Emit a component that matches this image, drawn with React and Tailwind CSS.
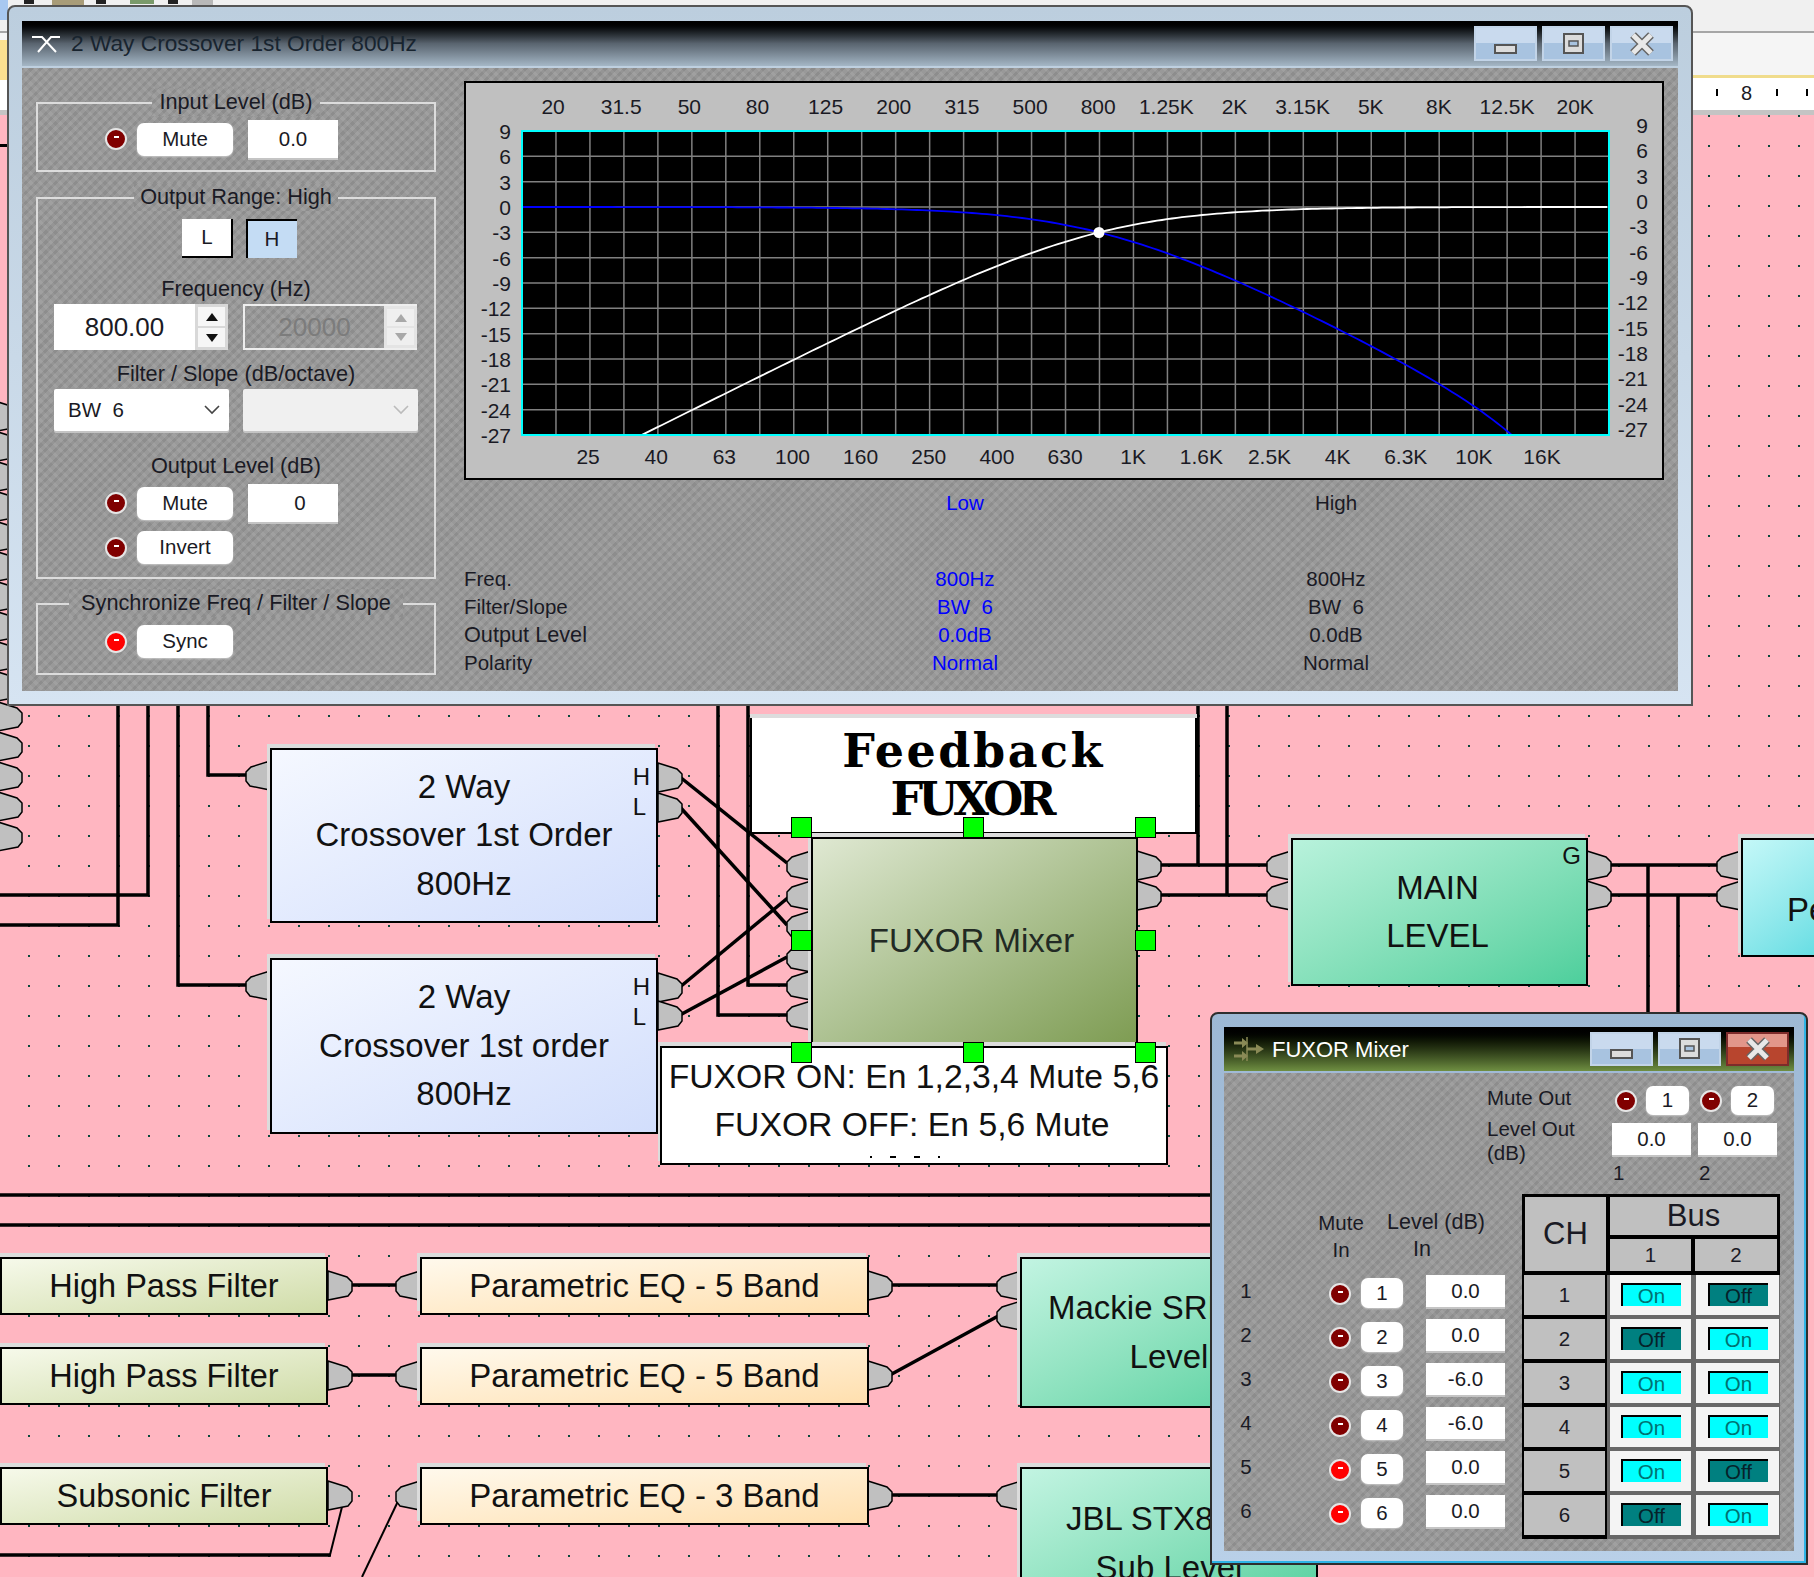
const TEX =
  "bg-[#999999] bg-[repeating-linear-gradient(45deg,rgba(255,255,255,0.07)_0_3px,transparent_3px_7px),repeating-linear-gradient(-45deg,rgba(0,0,0,0.08)_0_3px,transparent_3px_7px)]";

/* ---------- small controls ---------- */
function Led({ on }) {
  return (
    <div className={`relative w-[22px] h-[22px] shrink-0 rounded-full border-2 border-[#e6e6e6] ${on ? "bg-[#ff0000]" : "bg-[#800000]"}`}>
      <div className="absolute left-[7px] top-[6px] w-[5px] h-[2px] bg-white" />
    </div>
  );
}

function Btn({ className, children }) {
  return (
    <div className={`flex items-center justify-center rounded-[7px] bg-white shadow-[0_1px_2px_#c8c8c8] ${className}`}>{children}</div>
  );
}

function Field({ className, children }) {
  return <div className={`flex items-center justify-center bg-white shadow-[0_2px_0_#c4c4c4] ${className}`}>{children}</div>;
}

function Group({ label, labelPad, className, children }) {
  return (
    <div className={`relative border-2 border-[#dcdcdc] ${className}`}>
      <div className="absolute left-0 right-0 -top-[16px] flex justify-center">
        <span className={`${TEX} ${labelPad} h-[28px] leading-[28px] text-[21.7px] whitespace-nowrap`}>{label}</span>
      </div>
      {children}
    </div>
  );
}

function Spin({ value, disabled }) {
  return (
    <div className={`flex h-[46px] w-[174px] ${disabled ? "border-2 border-r-0 border-[#eeeeee]" : "bg-white"}`}>
      <div className={`flex-1 flex items-center justify-center text-[26px] ${disabled ? "text-[#7c7c7c]" : ""}`}>{value}</div>
      <div className={`w-[33px] flex flex-col gap-[2px] p-[3px] ${disabled ? "bg-[#e4e4e4]" : "bg-[#d8d8d8]"}`}>
        <div className={`flex-1 flex items-center justify-center ${disabled ? "bg-[#efefef]" : "bg-[#f6f6f6]"}`}>
          <svg width="12" height="8" viewBox="0 0 12 8"><path d="M6 0 L12 8 H0 Z" fill={disabled ? "#a8a8a8" : "#111"} /></svg>
        </div>
        <div className={`flex-1 flex items-center justify-center ${disabled ? "bg-[#efefef]" : "bg-[#f6f6f6]"}`}>
          <svg width="12" height="8" viewBox="0 0 12 8"><path d="M6 8 L12 0 H0 Z" fill={disabled ? "#a8a8a8" : "#111"} /></svg>
        </div>
      </div>
    </div>
  );
}

function Select({ value, disabled, className }) {
  return (
    <div className={`flex items-center justify-between h-[42px] pl-[14px] pr-[8px] rounded-[2px] ${disabled ? "bg-[#f0f0f0]" : "bg-white"} shadow-[0_2px_0_#c4c4c4] ${className}`}>
      <span className="whitespace-pre">{value}</span>
      <svg width="18" height="10" viewBox="0 0 18 10">
        <path d="M2 1 L9 8 L16 1" fill="none" stroke={disabled ? "#bbb" : "#444"} strokeWidth="1.6" />
      </svg>
    </div>
  );
}

function WinBtn({ kind, red }) {
  return (
    <div className={`w-[63px] flex items-center justify-center border-2 ${red ? "border-[#7d2b2b] bg-linear-to-b from-[#e2968a] from-45% to-[#b8452e] to-45%" : "border-[#c2d4e8] bg-linear-to-b from-[#c9daee] from-50% to-[#a8c3e0] to-50%"}`}>
      <svg width="26" height="24" viewBox="0 0 26 24">
        {kind === "min" && <rect x="2" y="13" width="21" height="8" fill="#dcdcdc" stroke="#555" strokeWidth="2" />}
        {kind === "max" && (
          <>
            <rect x="3" y="2" width="19" height="19" fill="#dcdcdc" stroke="#555" strokeWidth="2" />
            <rect x="8" y="9" width="9" height="5" fill="#a8c3e0" stroke="#555" strokeWidth="1.5" />
          </>
        )}
        {kind === "close" && (
          <>
            <path d="M4 3 L22 21 M22 3 L4 21" stroke="#666" strokeWidth="8" />
            <path d="M4 3 L22 21 M22 3 L4 21" stroke="#e8e8e8" strokeWidth="5" />
          </>
        )}
      </svg>
    </div>
  );
}

/* ---------- crossover window ---------- */
const TOP_FREQS = ["20", "31.5", "50", "80", "125", "200", "315", "500", "800", "1.25K", "2K", "3.15K", "5K", "8K", "12.5K", "20K"];
const BOT_FREQS = ["25", "40", "63", "100", "160", "250", "400", "630", "1K", "1.6K", "2.5K", "4K", "6.3K", "10K", "16K"];
const DBS = ["9", "6", "3", "0", "-3", "-6", "-9", "-12", "-15", "-18", "-21", "-24", "-27"];

function curve(high) {
  const pts = [];
  const w = (f) => Math.tan((Math.PI * Math.min(f, 23900)) / 48000);
  for (let x = 0; x <= 1087; x += 5) {
    const f = 800 * Math.pow(2, (x - 577) / 102);
    const r = w(f) / w(800);
    const db = -10 * Math.log10(1 + (high ? 1 / (r * r) : r * r));
    pts.push(`${x},${(76 - (db / 3) * 25.33).toFixed(1)}`);
  }
  return pts.join(" ");
}

function Plot() {
  return (
    <svg width="1089" height="306" viewBox="-1 -1 1089 306" className="shrink-0 block">
      <rect x="0" y="0" width="1087" height="304" fill="#000" />
      {Array.from({ length: 31 }, (_, i) => (
        <path key={i} d={`M${(i + 1) * 33.97} 0 V304`} stroke="#808080" strokeWidth="1.5" />
      ))}
      {Array.from({ length: 11 }, (_, i) => (
        <path key={i} d={`M0 ${(i + 1) * 25.33} H1087`} stroke="#808080" strokeWidth="1.5" />
      ))}
      <polyline points={curve(true)} fill="none" stroke="#ffffff" strokeWidth="1.8" />
      <polyline points={curve(false)} fill="none" stroke="#0000ff" strokeWidth="1.8" />
      <circle cx="577" cy="101.5" r="5.5" fill="#fff" />
      <rect x="0" y="0" width="1087" height="304" fill="none" stroke="#00ffff" strokeWidth="2" />
    </svg>
  );
}

function ReadRow({ a, b, c }) {
  return (
    <div className="flex h-[28px] leading-[28px]">
      <div className="w-[371px] whitespace-nowrap">{a}</div>
      <div className="w-[260px] text-center text-[#0000ff] whitespace-pre">{b}</div>
      <div className="w-[260px] ml-[111px] text-center whitespace-pre">{c}</div>
    </div>
  );
}

function CrossoverWindow() {
  return (
    <div className="absolute left-[7px] top-[5px] w-[1686px] h-[701px] border-2 border-[#555555] rounded-t-[8px] bg-linear-to-b from-[#bccede] to-[#d6e4f2] pt-[14px] pl-[13px]">
      <div className="w-[1656px] h-[45px] flex items-center pl-[10px] pr-[5px] bg-linear-to-b from-black via-[#59646f] to-[#a5b7c6]">
        <svg width="30" height="18" viewBox="0 0 30 18" className="shrink-0">
          <path d="M0 2 H10 L24 17 M28 2 H19 L6 17" fill="none" stroke="#fff" strokeWidth="2" />
        </svg>
        <span className="ml-[9px] text-[22.7px] text-[#18242f] flex-1 whitespace-nowrap">2 Way Crossover 1st Order 800Hz</span>
        <div className="flex gap-[5px] h-[35px]">
          <WinBtn kind="min" />
          <WinBtn kind="max" />
          <WinBtn kind="close" />
        </div>
      </div>
      <div className={`mt-[2px] w-[1656px] h-[623px] flex ${TEX}`}>
        {/* left column of controls */}
        <div className="w-[400px] ml-[14px] pt-[34px] flex flex-col">
          <Group label="Input Level (dB)" labelPad="px-[7px]" className="h-[70px]">
            <div className="flex items-center pl-[67px] pt-[16px]">
              <Led />
              <Btn className="ml-[10px] w-[96px] h-[33px]">Mute</Btn>
              <Field className="ml-[15px] w-[90px] h-[38px]">0.0</Field>
            </div>
          </Group>
          <Group label="Output Range: High" labelPad="px-[6px]" className="mt-[25px] h-[382px]">
            <div className="flex justify-center gap-[13px] pt-[20px] pl-[6px]">
              <div className="flex items-center justify-center w-[51px] h-[39px] pl-[2px] bg-white border-b-2 border-r-2 border-black">L</div>
              <div className="flex items-center justify-center w-[51px] h-[39px] bg-[#c4dcf4] border-t-2 border-l-2 border-black">H</div>
            </div>
            <div className="mt-[16px] h-[30px] leading-[30px] text-center text-[21.7px]">Frequency (Hz)</div>
            <div className="flex gap-[15px] pl-[16px]">
              <Spin value="800.00" />
              <Spin value="20000" disabled />
            </div>
            <div className="mt-[9px] h-[30px] leading-[30px] text-center text-[21.7px]">Filter / Slope (dB/octave)</div>
            <div className="flex gap-[14px] pl-[16px]">
              <Select value="BW  6" className="w-[175px]" />
              <Select value="" disabled className="w-[175px]" />
            </div>
            <div className="mt-[20px] h-[30px] leading-[30px] text-center text-[21.7px]">Output Level (dB)</div>
            <div className="mt-[3px] flex items-center pl-[67px] h-[38px]">
              <Led />
              <Btn className="ml-[10px] w-[96px] h-[33px]">Mute</Btn>
              <Field className="ml-[15px] w-[90px] h-[38px] pl-[14px]">0</Field>
            </div>
            <div className="mt-[9px] flex items-center pl-[67px] h-[33px]">
              <Led />
              <Btn className="ml-[10px] w-[96px] h-[33px]">Invert</Btn>
            </div>
          </Group>
          <Group label="Synchronize Freq / Filter / Slope" labelPad="px-[12px]" className="mt-[24px] h-[72px]">
            <div className="flex items-center pl-[67px] pt-[20px]">
              <Led on />
              <Btn className="ml-[10px] w-[96px] h-[33px]">Sync</Btn>
            </div>
          </Group>
        </div>

        {/* right column: graph and readout */}
        <div className="ml-[28px] pt-[13px] w-[1200px]">
          <div className="h-[399px] border-2 border-black bg-[#c0c0c0] flex flex-col text-[21px]">
            <div className="h-[47px] pl-[53px] flex items-center">
              {TOP_FREQS.map((f) => (
                <div key={f} className="w-[68.15px] shrink-0 text-center">{f}</div>
              ))}
            </div>
            <div className="flex h-[306px]">
              <div className="w-[55px] shrink-0 pr-[10px] -mt-[11px] flex flex-col">
                {DBS.map((d) => (
                  <div key={d} className="h-[25.35px] shrink-0 leading-[25px] text-right">{d}</div>
                ))}
              </div>
              <Plot />
              <div className="flex-1 pr-[14px] -mt-[17px] flex flex-col">
                {DBS.map((d) => (
                  <div key={d} className="h-[25.35px] shrink-0 leading-[25px] text-right">{d}</div>
                ))}
              </div>
            </div>
            <div className="flex-1 pl-[88px] flex items-center">
              {BOT_FREQS.map((f) => (
                <div key={f} className="w-[68.15px] shrink-0 text-center">{f}</div>
              ))}
            </div>
          </div>
          <div className="mt-[9px]">
            <ReadRow a="" b="Low" c="High" />
          </div>
          <div className="mt-[48px]">
            <ReadRow a="Freq." b="800Hz" c="800Hz" />
            <ReadRow a="Filter/Slope" b="BW  6" c="BW  6" />
            <ReadRow a={<span className="text-[21.7px]">Output Level</span>} b="0.0dB" c="0.0dB" />
            <ReadRow a="Polarity" b="Normal" c="Normal" />
          </div>
        </div>
      </div>
    </div>
  );
}

/* ---------- mixer window ---------- */
const MIX_ROWS = [
  { n: "1", lit: false, lvl: "0.0", a: true, b: false },
  { n: "2", lit: false, lvl: "0.0", a: false, b: true },
  { n: "3", lit: false, lvl: "-6.0", a: true, b: true },
  { n: "4", lit: false, lvl: "-6.0", a: true, b: true },
  { n: "5", lit: true, lvl: "0.0", a: true, b: false },
  { n: "6", lit: true, lvl: "0.0", a: false, b: true },
];

function BusCell({ on, className }) {
  return (
    <div className={`h-[40px] flex justify-center pt-[8px] bg-[#f4f4f4] ${className}`}>
      <div className={`w-[60px] h-[23px] border-t-2 border-l-2 border-black text-center text-[20.5px] leading-[22px] ${on ? "bg-[#00ffff] text-[#007272]" : "bg-[#008080] text-[#06222a]"}`}>
        {on ? "On" : "Off"}
      </div>
    </div>
  );
}

function MixerWindow() {
  return (
    <div className="absolute left-[1210px] top-[1012px] w-[598px] h-[553px] border-2 border-[#2e2e2e] rounded-t-[8px] bg-linear-to-b from-[#9db8d4] to-[#b9d0e8] pt-[13px] pl-[12px] shadow-[inset_-2px_-2px_0_#2eb4e6]">
      <div className="w-[570px] h-[44px] flex items-center pl-[10px] pr-[5px] bg-linear-to-b from-black to-[#6f8f42]">
        <svg width="30" height="28" viewBox="0 0 30 28" className="shrink-0">
          <path d="M0 8 H11 M0 21 H11 M13 14 H24" stroke="#8a8a56" strokeWidth="3" />
          <path d="M8 3 L14 8 L8 13 Z M8 16 L14 21 L8 26 Z M22 9 L30 14 L22 19 Z" fill="#8a8a56" />
          <path d="M13 2 V26" stroke="#8a8a56" strokeWidth="1.5" />
        </svg>
        <span className="ml-[8px] text-[22px] text-white flex-1 whitespace-nowrap">FUXOR Mixer</span>
        <div className="flex gap-[5px] h-[34px]">
          <WinBtn kind="min" />
          <WinBtn kind="max" />
          <WinBtn kind="close" red />
        </div>
      </div>
      <div className={`mt-[2px] w-[570px] h-[478px] ${TEX}`}>
        {/* output section */}
        <div className="h-[121px] pl-[263px] pt-[13px] grid grid-cols-[118px_79px_79px] gap-x-[7px] content-start">
          <div className="h-[29px] leading-[24px] whitespace-nowrap">Mute Out</div>
          <div className="h-[29px] flex items-center pl-[3px]">
            <Led />
            <Btn className="ml-[9px] w-[43px] h-[29px]">1</Btn>
          </div>
          <div className="h-[29px] flex items-center pl-[2px]">
            <Led />
            <Btn className="ml-[9px] w-[43px] h-[29px]">2</Btn>
          </div>
          <div className="mt-[2px] h-[32px] leading-[24px] whitespace-pre">{"Level Out\n(dB)"}</div>
          <Field className="mt-[8px] h-[32px]">0.0</Field>
          <Field className="mt-[8px] h-[32px]">0.0</Field>
          <div />
          <div className="h-[28px] leading-[28px] pl-[1px] mt-[4px]">1</div>
          <div className="h-[28px] leading-[28px] pl-[1px] mt-[4px]">2</div>
        </div>

        <div className="flex">
          {/* inputs */}
          <div className="w-[298px]">
            <div className="h-[78px] flex pl-[77px] pt-[15px] leading-[27px]">
              <div className="w-[80px] text-center">Mute<br />In</div>
              <div className="w-[110px] text-center text-[21.5px] whitespace-nowrap">Level (dB)<br /><span className="pr-[28px]">In</span></div>
            </div>
            {MIX_ROWS.map((r) => (
              <div key={r.n} className="flex items-center h-[44px]">
                <div className="w-[44px] text-center mb-[5px]">{r.n}</div>
                <div className="ml-[61px]"><Led on={r.lit} /></div>
                <Btn className="ml-[10px] w-[42px] h-[30px] mb-[2px]">{r.n}</Btn>
                <Field className="ml-[23px] w-[79px] h-[32px] mb-[6px]">{r.lvl}</Field>
              </div>
            ))}
          </div>

          {/* bus matrix */}
          <div className="w-[258px]">
            <div className="h-[81px] flex gap-[4px] border-[3px] border-b-0 border-black bg-black">
              <div className="w-[81px] h-[74px] flex items-center justify-center bg-[#c0c0c0] text-[31px]">CH</div>
              <div className="flex-1 flex flex-col gap-[4px] h-[74px]">
                <div className="h-[38px] flex items-center justify-center bg-[#c0c0c0] text-[31px]">Bus</div>
                <div className="flex-1 flex gap-[4px]">
                  <div className="w-[81px] flex items-center justify-center bg-[#c0c0c0]">1</div>
                  <div className="flex-1 flex items-center justify-center bg-[#c0c0c0]">2</div>
                </div>
              </div>
            </div>
            {MIX_ROWS.map((r) => (
              <div key={r.n} className="flex h-[44px] bg-[#686868] pr-[1px]">
                <div className="w-[85px] h-[44px] flex items-center justify-center border-x-[2px] border-b-4 border-black bg-[#c0c0c0]">{r.n}</div>
                <BusCell on={r.a} className="ml-[3px] w-[81px]" />
                <BusCell on={r.b} className="ml-[5px] w-[83px]" />
              </div>
            ))}
          </div>
        </div>
      </div>
    </div>
  );
}

/* ---------- diagram canvas ---------- */
function Box({ className, children }) {
  return (
    <div className={`absolute border-2 border-black shadow-[-3px_-4px_0_0_#dcdcdc] flex flex-col items-center justify-center text-[33px] leading-[48.5px] text-[#111111] whitespace-nowrap ${className}`}>
      {children}
    </div>
  );
}

const PORTS_R = [
  ...Array.from({ length: 15 }, (_, i) => [-2, 416 + i * 30]),
  [658, 777], [658, 807], [658, 987], [658, 1015],
  [1137, 865], [1137, 895], [1587, 865], [1587, 895],
  [328, 1285], [328, 1375], [328, 1495], [868, 1285], [868, 1375], [868, 1495],
];
const PORTS_L = [
  [270, 775], [270, 985],
  [811, 865], [811, 895], [811, 925], [811, 957], [811, 985], [811, 1015],
  [1291, 865], [1291, 895], [1741, 865], [1741, 895],
  [420, 1285], [420, 1375], [420, 1495], [1021, 1285], [1021, 1315], [1021, 1495],
];

const WIRES = [
  "M0 895 H148 V700", "M0 925 H118 V700", "M178 700 V985 H246", "M208 700 V775 H246",
  "M748 700 V985 H787", "M718 700 V1015 H787", "M680 777 L787 863", "M680 807 L787 925",
  "M680 987 L790 896", "M680 1015 L787 957",
  "M1161 865 H1270", "M1161 895 H1270", "M1198 700 V865", "M1227 700 V895",
  "M1611 865 H1719", "M1611 895 H1719", "M1648 865 V1015", "M1678 895 V1015",
  "M0 1195 H1210", "M0 1225 H1210",
  "M350 1285 H399", "M350 1375 H399", "M890 1285 H1000", "M890 1375 L1000 1315", "M890 1495 H1000",
  "M0 1555 H331",
];

function Wires() {
  return (
    <svg width="1814" height="1577" viewBox="0 0 1814 1577" className="absolute left-0 top-0">
      {WIRES.map((d) => (
        <path key={d} d={d} fill="none" stroke="#000" strokeWidth="3.5" />
      ))}
      <path d="M345 1495 L330 1555" fill="none" stroke="#000" strokeWidth="2" />
      <path d="M400 1497 L362 1577" fill="none" stroke="#000" strokeWidth="2" />
      {PORTS_R.map(([x, y]) => (
        <path key={`r${x}-${y}`} d={`M${x} ${y - 14} L${x + 19} ${y - 8} L${x + 24} ${y - 3} V${y + 6} L${x + 20} ${y + 11} L${x} ${y + 15} Z`} fill="#c0c0c0" stroke="#000" strokeWidth="1.5" />
      ))}
      {PORTS_L.map(([x, y]) => (
        <path key={`l${x}-${y}`} d={`M${x} ${y - 14} L${x - 19} ${y - 8} L${x - 24} ${y - 3} V${y + 6} L${x - 20} ${y + 11} L${x} ${y + 15} Z`} fill="#c0c0c0" stroke="#000" strokeWidth="1.5" />
      ))}
    </svg>
  );
}

function Handle({ className }) {
  return <div className={`absolute w-[21px] h-[21px] bg-[#00ff00] border border-black ${className}`} />;
}

function TopChrome() {
  return (
    <div className="absolute left-0 right-0 top-0 flex flex-col">
      <div className="h-[33px] bg-[#f0f0f0] border-b-2 border-[#a6a6a6]" />
      <div className="h-[42px] bg-[#f5f5f5]" />
      <div className="h-[3px] bg-[#f0dc8c]" />
      <div className="relative h-[32px] bg-white">
        <div className="absolute left-[1716px] top-[11px] w-[2px] h-[7px] bg-black" />
        <div className="absolute left-[1741px] top-[2px] text-[20px] leading-[26px]">8</div>
        <div className="absolute left-[1776px] top-[11px] w-[2px] h-[7px] bg-black" />
        <div className="absolute left-[1806px] top-[11px] w-[2px] h-[7px] bg-black" />
      </div>
      <div className="h-[5px] bg-[#c4c4c4]" />
    </div>
  );
}

export default function App() {
  return (
    <div className="relative w-[1814px] h-[1577px] overflow-hidden [font-family:'Liberation_Sans',Arial,sans-serif] text-[20.5px] text-[#1a1a24] bg-[#ffb6c1] bg-[radial-gradient(circle_at_1px_1px,#0c4a3c_1px,transparent_1.3px)] bg-[size:30px_30px] bg-[position:28px_25px]">
      <TopChrome />
      <div className="absolute left-0 top-0 w-[8px] h-[20px] bg-[#a8c8f0]" />
      <div className="absolute left-0 top-[40px] w-[8px] h-[40px] bg-[#fbe090]" />
      <div className="absolute left-[24px] top-0 w-[10px] h-[4px] bg-[#222222]" />
      <div className="absolute left-[52px] top-0 w-[32px] h-[5px] bg-[#a89c78]" />
      <div className="absolute left-[96px] top-0 w-[10px] h-[4px] bg-[#222222]" />
      <div className="absolute left-[130px] top-0 w-[24px] h-[4px] bg-[#7a9a6a]" />
      <div className="absolute left-[168px] top-0 w-[10px] h-[4px] bg-[#222222]" />
      <div className="absolute left-[192px] top-0 w-[21px] h-[5px] bg-[#b8b8b8]" />
      <div className="absolute left-0 top-[144px] w-[7px] h-[3px] bg-black" />

      <Wires />

      <div className="absolute left-[750px] top-[718px] w-[447px] h-[116px] border-2 border-t-0 border-black bg-white shadow-[0_-4px_0_0_#dcdcdc] flex flex-col items-center justify-center [font-family:'DejaVu_Serif',serif] font-bold text-black text-[46px] leading-[48px]">
        <div className="tracking-[2.5px]">Feedback</div>
        <div className="tracking-[-5px] pr-[5px]">FUXOR</div>
      </div>

      <Box className="left-[270px] top-[748px] w-[388px] h-[175px] bg-linear-to-br from-[#f5f8ff] to-[#d2defc]">
        <div>2 Way</div>
        <div>Crossover 1st Order</div>
        <div>800Hz</div>
        <div className="absolute right-[6px] top-[12px] flex flex-col text-[24px] leading-[30px]"><span>H</span><span>L</span></div>
      </Box>
      <Box className="left-[270px] top-[958px] w-[388px] h-[176px] bg-linear-to-br from-[#f5f8ff] to-[#d2defc]">
        <div>2 Way</div>
        <div>Crossover 1st order</div>
        <div>800Hz</div>
        <div className="absolute right-[6px] top-[12px] flex flex-col text-[24px] leading-[30px]"><span>H</span><span>L</span></div>
      </Box>

      <Box className="left-[811px] top-[837px] w-[327px] h-[209px] bg-linear-to-br from-[#dfe8d2] to-[#7e9c52] pr-[6px]">
        <div className="text-[#222a24]">FUXOR Mixer</div>
      </Box>

      <Box className="left-[1291px] top-[838px] w-[297px] h-[148px] bg-linear-to-br from-[#b8f2dc] to-[#4ccf9c] pr-[4px]">
        <div>MAIN</div>
        <div>LEVEL</div>
        <div className="absolute right-[5px] top-[1px] text-[24px] leading-[30px]">G</div>
      </Box>
      <Box className="left-[1741px] top-[838px] w-[160px] h-[119px] bg-linear-to-br from-[#c4f8f8] to-[#2ed4dc] !items-start pl-[44px] pt-[26px]">
        <div>Pe</div>
      </Box>

      <Box className="left-0 top-[1257px] w-[328px] h-[58px] bg-linear-to-br from-[#f6f9ea] to-[#d0dca8]"><span className="text-[32.5px]">High Pass Filter</span></Box>
      <Box className="left-0 top-[1347px] w-[328px] h-[58px] bg-linear-to-br from-[#f6f9ea] to-[#d0dca8]"><span className="text-[32.5px]">High Pass Filter</span></Box>
      <Box className="left-0 top-[1467px] w-[328px] h-[58px] bg-linear-to-br from-[#f6f9ea] to-[#d0dca8]"><span className="text-[32.5px]">Subsonic Filter</span></Box>
      <Box className="left-[420px] top-[1257px] w-[449px] h-[58px] bg-linear-to-br from-[#fff9ec] to-[#ffdfae]">Parametric EQ - 5 Band</Box>
      <Box className="left-[420px] top-[1347px] w-[449px] h-[58px] bg-linear-to-br from-[#fff9ec] to-[#ffdfae]">Parametric EQ - 5 Band</Box>
      <Box className="left-[420px] top-[1467px] w-[449px] h-[58px] bg-linear-to-br from-[#fff9ec] to-[#ffdfae]">Parametric EQ - 3 Band</Box>
      <Box className="left-[1020px] top-[1257px] w-[298px] h-[151px] bg-linear-to-br from-[#c2f4e2] to-[#4ccf9c]">
        <div>Mackie SRM450</div>
        <div>Level</div>
      </Box>
      <Box className="left-[1020px] top-[1467px] w-[298px] h-[151px] bg-linear-to-br from-[#c2f4e2] to-[#4ccf9c] !justify-start pt-[26px]">
        <div>JBL STX818S</div>
        <div>Sub Level</div>
      </Box>

      <div className="absolute left-[660px] top-[1046px] w-[508px] h-[119px] border-2 border-black bg-white shadow-[-2px_-4px_0_0_#dcdcdc] flex flex-col items-center pt-[4px] text-[33.7px] leading-[48px] text-[#111111] whitespace-nowrap">
        <div>FUXOR ON: En 1,2,3,4 Mute 5,6</div>
        <div className="pr-[4px]">FUXOR OFF: En 5,6 Mute</div>
        <div className="absolute left-[208px] top-[108px] flex gap-[18px]">
          <span className="w-[2px] h-[2px] bg-black" />
          <span className="w-[6px] h-[2px] bg-black" />
          <span className="w-[6px] h-[2px] bg-black" />
          <span className="w-[2px] h-[2px] bg-black" />
        </div>
      </div>

      <Handle className="left-[791px] top-[817px]" />
      <Handle className="left-[963px] top-[817px]" />
      <Handle className="left-[1135px] top-[817px]" />
      <Handle className="left-[791px] top-[930px]" />
      <Handle className="left-[1135px] top-[930px]" />
      <Handle className="left-[791px] top-[1042px]" />
      <Handle className="left-[963px] top-[1042px]" />
      <Handle className="left-[1135px] top-[1042px]" />

      <CrossoverWindow />
      <MixerWindow />
    </div>
  );
}
